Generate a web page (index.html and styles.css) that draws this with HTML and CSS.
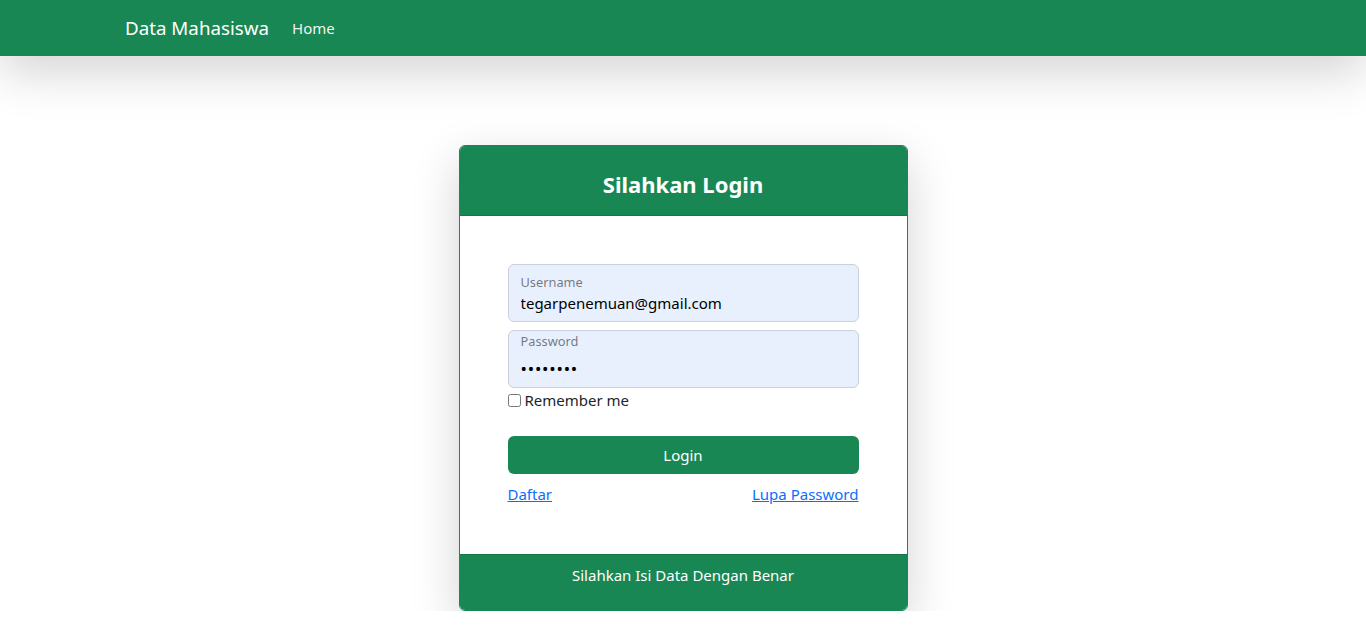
FILE: index.html
```html
<!DOCTYPE html>
<html lang="id">
<head>
<meta charset="utf-8">
<title>Login - Data Mahasiswa</title>
<link rel="stylesheet" href="styles.css">
</head>
<body>
<nav class="navbar">
  <div class="nav-inner">
    <a class="brand" href="#">Data Mahasiswa</a>
    <a class="nav-link" href="#">Home</a>
  </div>
</nav>
<main class="page">
  <div class="card">
    <div class="card-header">
      <h3 class="card-title">Silahkan Login</h3>
    </div>
    <div class="card-body">
      <div class="field">
        <label class="field-label" for="username">Username</label>
        <input class="field-input" id="username" type="text" value="tegarpenemuan@gmail.com">
      </div>
      <div class="field field-pass">
        <label class="field-label" for="password">Password</label>
        <input class="field-input" id="password" type="password" value="password">
      </div>
      <div class="check-row">
        <input class="check" type="checkbox" id="remember">
        <label class="check-label" for="remember">Remember me</label>
      </div>
      <button class="btn-login" type="button">Login</button>
      <div class="links">
        <a href="#" class="link">Daftar</a>
        <a href="#" class="link">Lupa Password</a>
      </div>
    </div>
    <div class="card-footer">
      <p class="footer-text">Silahkan Isi Data Dengan Benar</p>
    </div>
  </div>
</main>
</body>
</html>
```

FILE: styles.css
```css
* { box-sizing: border-box; }

html, body {
  margin: 0;
  padding: 0;
  background: #fff;
  font-family: "Noto Sans", "Open Sans", sans-serif;
  font-size: 15px;
  line-height: 24px;
  color: #212529;
}

.navbar {
  background: #198754;
  height: 56px;
  box-shadow: 0 16px 48px rgba(0, 0, 0, 0.175);
  position: relative;
  z-index: 2;
}

.nav-inner {
  width: 1140px;
  margin: 0 auto;
  padding: 0 12px;
  height: 56px;
  display: flex;
  align-items: center;
}

.brand {
  color: #fff;
  text-decoration: none;
  font-size: 18.75px;
  line-height: 30px;
  margin-right: 15px;
}

.nav-link {
  color: rgba(255, 255, 255, 0.95);
  text-decoration: none;
  font-size: 15px;
  padding: 8px;
}

.page {
  display: flex;
  justify-content: center;
  padding-top: 89px;
}

.card {
  width: 449px;
  border: 1px solid #198754;
  border-radius: 6px;
  background: #fff;
  box-shadow: 0 16px 48px rgba(0, 0, 0, 0.175);
  overflow: hidden;
}

.card-header {
  background: #198754;
  border-bottom: 1px solid #167549;
  padding: 25px 16px 18px;
  text-align: center;
}

.card-title {
  margin: 0;
  color: #fff;
  font-size: 22px;
  font-weight: 700;
  line-height: 26px;
}

.card-body {
  padding: 48px;
  display: flex;
  flex-direction: column;
}

.field {
  position: relative;
  height: 58px;
  border: 1px solid #c9d1dc;
  border-radius: 6px;
  background: #e8f0fe;
  margin-bottom: 8px;
}

.field-label {
  position: absolute;
  left: 12px;
  top: 7px;
  font-size: 12.8px;
  line-height: 20px;
  color: rgba(33, 37, 41, 0.6);
}

.field-pass .field-label {
  top: 0;
}

.field-input {
  display: block;
  width: 100%;
  height: 100%;
  border: 0;
  background: transparent;
  padding: 26px 12px 6px;
  font-family: inherit;
  font-size: 15px;
  line-height: 24px;
  color: #000;
  outline: none;
}

.field-pass .field-input {
  padding-top: 24px;
  font-size: 17px;
  letter-spacing: 0.8px;
}

.field-pass {
  margin-bottom: 0;
}

.check-row {
  display: flex;
  align-items: center;
  height: 24px;
}

.check {
  margin: 0 4px 0 0;
  width: 13px;
  height: 13px;
}

.check-label {
  font-size: 15px;
}

.btn-login {
  margin-top: 24px;
  height: 38px;
  border: 0;
  border-radius: 6px;
  background: #198754;
  color: #fff;
  font-family: inherit;
  font-size: 15px;
}

.links {
  margin-top: 8px;
  display: flex;
  justify-content: space-between;
}

.link {
  color: #0d6efd;
  text-decoration: underline;
}

.card-footer {
  background: #198754;
  border-top: 1px solid #167549;
  padding: 8px 16px 7px;
  text-align: center;
}

.footer-text {
  margin: 0 0 16px;
  color: #fff;
}
```
